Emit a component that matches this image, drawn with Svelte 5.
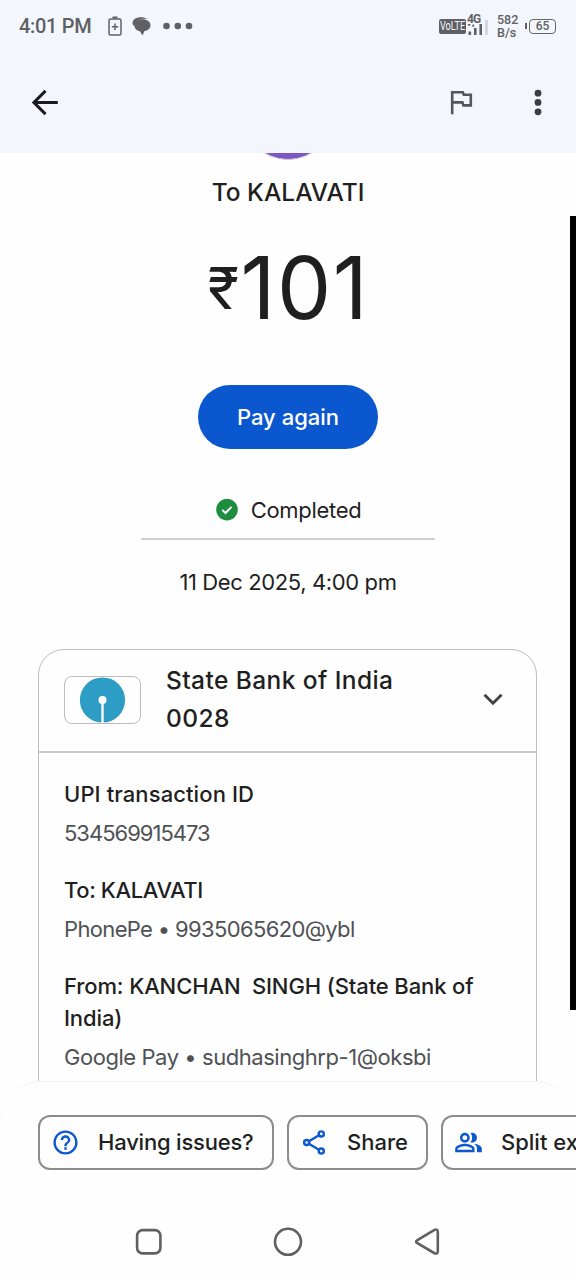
<script>
	// payment shown on the screen
	const payment = {
		payee: 'To KALAVATI',
		currency: '₹',
		amount: '101',
		status: 'Completed',
		date: '11 Dec 2025, 4:00 pm',
	};

	const bank = { name: 'State Bank of India', account: '0028' };

	const details = [
		{ key: 'upi', label: 'UPI transaction ID', value: '534569915473' },
		{ key: 'to', label: 'To: KALAVATI', value: 'PhonePe • 9935065620@ybl' },
		{
			key: 'from',
			label: 'From: KANCHAN  SINGH (State Bank of India)',
			value: 'Google Pay • sudhasinghrp-1@oksbi',
		},
	];

	const actions = [
		{ key: 'help', label: 'Having issues?' },
		{ key: 'share', label: 'Share' },
		{ key: 'split', label: 'Split expense' },
	];
</script>

<div class="screen">
	<header>
		<div class="status">
			<span class="time">4:01 PM</span>
			<svg width="14" height="20" viewBox="0 0 14 20">
				<rect x="1" y="3" width="12" height="16" rx="1.5" fill="none" stroke="#5f6064" stroke-width="1.5" />
				<path d="M4.5 0.5h5v2h-5z" fill="#5f6064" />
				<path d="M7 7.5v6.4M3.8 10.7h6.4" stroke="#5f6064" stroke-width="1.5" />
			</svg>
			<svg class="chat" width="19" height="19" viewBox="0 0 19 19">
				<path d="M2.2 9.2C-0.5 7.5 0.2 3 3.5 1.5 7-0.2 12.5 0 15.5 2.2 10 0.9 3.5 2.5 2.2 9.2z" fill="#5f6064" />
				<path d="M10.2 2.3c4.800 0 8.300 2.500 8.300 6 0 2.900-2.300 5.300-6.300 5.900L10.700 18.500 7.800 14.200C4.500 13.500 2.300 11.300 2.300 8.400c0-3.600 3.300-6.100 7.900-6.100z" fill="#5f6064" />
			</svg>
			<svg class="more" width="30" height="8" viewBox="0 0 30 8" fill="#5f6064">
				<circle cx="3.5" cy="4" r="3.3" />
				<circle cx="14.8" cy="4" r="3.3" />
				<circle cx="26" cy="4" r="3.3" />
			</svg>

			<div class="volte"><span>VoLTE</span></div>
			<div class="signal">
				<span>4G</span>
				<svg width="21" height="13" viewBox="0 0 21 13">
					<path d="M0.5 0h3.2L2.1 2.5zM4.6 2.5L6.2 0l1.6 2.5z" fill="#5f6064" />
					<path d="M2.8 7.5v3.500M8.300 4v7M13.700 0v11" stroke="#5f6064" stroke-width="2.6" />
					<path d="M19.500 -4v15" stroke="#cfd3dc" stroke-width="2.6" />
				</svg>
			</div>
			<div class="speed"><span>582</span><span>B/s</span></div>
			<div class="battery"><i></i><span>65</span></div>
		</div>

		<div class="appbar">
			<svg width="28" height="28" viewBox="0 0 28 28" fill="none" stroke="#1b1a20" stroke-width="3">
				<path d="M26.8 13.5H3M14.5 1.9L2.9 13.5l11.600 11.600" />
			</svg>
			<svg class="flag" width="24" height="26" viewBox="0 0 24 26" fill="none" stroke="#54565c" stroke-width="2.6">
				<path d="M2.2 24.2V2.200h10.600l1 2.500h7v10.700h-7.400l-1-3H2.200" />
			</svg>
			<svg class="dots" width="8" height="28" viewBox="0 0 8 28" fill="#3c3d40">
				<circle cx="4" cy="4.2" r="3.4" />
				<circle cx="4" cy="13.4" r="3.4" />
				<circle cx="4" cy="22.8" r="3.4" />
			</svg>
		</div>
	</header>

	<main>
		<div class="avatar"></div>
		<div class="payee">{payment.payee}</div>
		<div class="amount"><span class="currency">{payment.currency}</span><span>{payment.amount}</span></div>
		<button class="pay">Pay again</button>
		<div class="state">
			<svg width="22" height="22" viewBox="0 0 22 22">
				<circle cx="11" cy="10.6" r="10.8" fill="#1e8e3e" />
				<path d="M6.3 10.900l3.200 3.100 6-6.100" fill="none" stroke="#fff" stroke-width="2" />
			</svg>
			<span>{payment.status}</span>
		</div>
		<hr />
		<div class="date">{payment.date}</div>

		<section class="card">
			<div class="bank">
				<div class="logo">
					<svg width="46" height="46" viewBox="0 0 46 46">
						<circle cx="22.500" cy="23" r="22.6" fill="#2d9dc6" />
						<circle cx="22.500" cy="23" r="4" fill="#fff" />
						<path d="M22.500 23v23" stroke="#fff" stroke-width="2.4" />
					</svg>
				</div>
				<div class="bankname">
					<span>{bank.name}</span>
					<span>{bank.account}</span>
				</div>
				<svg class="chevron" width="20" height="13" viewBox="0 0 20 13" fill="none" stroke="#444" stroke-width="3">
					<path d="M1.5 1.7L10 10.2l8.500-8.500" />
				</svg>
			</div>
			<dl>
				{#each details as item (item.key)}
					<dt class={item.key}>{item.label}</dt>
					<dd class={item.key}>{item.value}</dd>
				{/each}
			</dl>
		</section>
	</main>

	<footer>
		<div class="actions">
			{#each actions as action (action.key)}
				<button class="chip {action.key}">
					<svg width="29" height="29" viewBox="0 0 24 24">
						{#if action.key === 'help'}
							<path d="M11 18h2v-2h-2v2zm1-16C6.480 2 2 6.480 2 12s4.480 10 10 10 10-4.480 10-10S17.520 2 12 2zm0 18c-4.410 0-8-3.590-8-8s3.590-8 8-8 8 3.590 8 8-3.590 8-8 8zm0-14c-2.210 0-4 1.790-4 4h2c0-1.100.9-2 2-2s2 .9 2 2c0 2-3 1.750-3 5h2c0-2.250 3-2.500 3-5 0-2.210-1.790-4-4-4z" />
						{:else if action.key === 'share'}
							<g fill="none" stroke="#0b57d0" stroke-width="2">
								<circle cx="5.5" cy="12" r="2.1" />
								<circle cx="17.6" cy="4.9" r="2.1" />
								<circle cx="17.6" cy="19.1" r="2.1" />
								<path d="M7.4 10.9l8.300-4.900M7.400 13.100l8.300 4.900" />
							</g>
						{:else}
							<path d="M16.670 13.130C18.040 14.060 19 15.320 19 17v3h4v-3c0-2.180-3.570-3.470-6.330-3.870zM15 12c2.210 0 4-1.790 4-4s-1.790-4-4-4c-.47 0-.91.1-1.330.24C14.500 5.270 15 6.580 15 8s-.5 2.730-1.330 3.760c.42.14.86.24 1.330.24zM9 12c2.210 0 4-1.790 4-4s-1.790-4-4-4-4 1.790-4 4 1.790 4 4 4zm0-6c1.100 0 2 .9 2 2s-.9 2-2 2-2-.9-2-2 .9-2 2-2zM9 13c-2.670 0-8 1.340-8 4v3h16v-3c0-2.660-5.330-4-8-4zm6 5H3v-.99C3.200 16.290 6.300 15 9 15s5.800 1.290 6 2v1z" />
						{/if}
					</svg>
					<span>{action.label}</span>
				</button>
			{/each}
		</div>
		<nav>
			<svg width="28" height="30" viewBox="0 0 28 30">
				<rect x="2.1" y="3.1" width="23.3" height="23.3" rx="5.5" />
			</svg>
			<svg width="30" height="30" viewBox="0 0 30 30">
				<circle cx="15" cy="14.8" r="13" />
			</svg>
			<svg width="28" height="30" viewBox="0 0 28 30">
				<path d="M21.5 2.900L4.400 13.200q-2.500 1.500 0 3L21.500 26.200q3.300 1.200 3.300-2V4.900q0-3.200-3.300-2z" />
			</svg>
		</nav>
	</footer>

	<div class="edge"></div>
</div>

<style>
	:global(body) {
		margin: 0;
		background: #fff;
	}

	.screen {
		position: relative;
		display: flex;
		flex-direction: column;
		width: 576px;
		height: 1280px;
		overflow: hidden;
		background: #fefefe;
		color: #1f1f1f;
		font-family: Inter, Roboto, sans-serif;
		font-size: 22px;
	}

	header {
		flex: none;
		height: 153px;
		background: #f3f6fd;
	}

	/* system status row */
	.status {
		display: flex;
		align-items: center;
		height: 52px;
		padding: 0 20px 0 19px;
		color: #5f6064;
		font-family: Roboto, sans-serif;
	}
	.time {
		width: 89px;
		font-size: 20px;
		font-weight: 500;
		letter-spacing: -0.3px;
		white-space: nowrap;
	}
	.chat {
		margin-left: 10px;
	}
	.more {
		margin-left: 12px;
	}
	.volte {
		display: flex;
		justify-content: center;
		width: 27px;
		height: 15px;
		margin-left: auto;
		border-radius: 2px;
		background: #5f6064;
		color: #f3f6fd;
		font-size: 12px;
		line-height: 15px;
	}
	.volte span {
		transform: scaleX(0.76);
	}
	.signal {
		display: flex;
		flex-direction: column;
		width: 22px;
		height: 24px;
		margin-left: 1px;
		font-size: 12px;
		font-weight: 700;
		letter-spacing: -1px;
		line-height: 10px;
	}
	.signal svg {
		overflow: visible;
	}
	.speed {
		display: flex;
		flex-direction: column;
		width: 24px;
		margin-left: 8px;
		font-size: 12.5px;
		font-weight: 500;
		line-height: 13px;
	}
	.battery {
		display: flex;
		align-items: center;
		margin-left: 4px;
		font-size: 12px;
		font-weight: 500;
	}
	.battery i {
		width: 2px;
		height: 6px;
		margin-right: 2px;
		background: #5f6064;
	}
	.battery span {
		box-sizing: border-box;
		width: 27px;
		height: 15px;
		border: 1px solid #66676b;
		border-radius: 4px;
		line-height: 13px;
		text-align: center;
	}

	.appbar {
		display: flex;
		align-items: center;
		height: 101px;
		padding: 0 34px 0 31px;
	}
	.flag {
		margin-left: auto;
	}
	.dots {
		margin-left: 60px;
	}

	main {
		display: flex;
		flex: none;
		flex-direction: column;
		align-items: center;
		height: 928px;
		overflow: hidden;
	}
	.avatar {
		box-sizing: border-box;
		flex: none;
		width: 92px;
		height: 92px;
		margin-top: -85px;
		border: 1px solid #d5cfe0;
		border-radius: 50%;
		background: #7e57c2;
	}
	.payee {
		margin-top: 16px;
		font-size: 24.5px;
		font-weight: 450;
		line-height: 32px;
	}
	.amount {
		display: flex;
		margin: 40px 0 0 1px;
		font-size: 86px;
		letter-spacing: 1.5px;
		line-height: 80px;
	}
	.currency {
		font-size: 58px;
		font-weight: 380;
	}
	.pay {
		flex: none;
		width: 180px;
		height: 64px;
		margin-top: 57px;
		padding: 0;
		border: 0;
		border-radius: 32px;
		background: #0b57d0;
		color: #fff;
		font: 500 22px Inter, sans-serif;
	}
	.state {
		display: flex;
		align-items: center;
		gap: 13px;
		margin: 45px 0 0 1px;
		letter-spacing: -0.3px;
		line-height: 32px;
	}
	hr {
		flex: none;
		width: 294px;
		height: 2px;
		margin: 12px 0 0;
		border: 0;
		background: #cfcfcf;
	}
	.date {
		margin-top: 26px;
		letter-spacing: -0.38px;
		line-height: 32px;
	}

	.card {
		box-sizing: border-box;
		flex: none;
		width: 499px;
		height: 520px;
		margin: 51px 1px 0 0;
		border: 1px solid #bdbdbd;
		border-radius: 26px;
	}
	.bank {
		box-sizing: border-box;
		display: flex;
		align-items: center;
		height: 103px;
		padding: 0 33px 2px 25px;
		border-bottom: 2px solid #cbcbcb;
	}
	.logo {
		box-sizing: border-box;
		display: flex;
		align-items: center;
		justify-content: center;
		width: 77px;
		height: 48px;
		border: 1px solid #bdbdbd;
		border-radius: 8px;
	}
	.bankname {
		display: flex;
		flex-direction: column;
		margin: -2px 0 0 25px;
		font-size: 24.5px;
		font-weight: 450;
		letter-spacing: 0.42px;
		line-height: 38px;
	}
	.chevron {
		margin-left: auto;
	}
	dl {
		margin: 0;
		padding: 25px 25px;
	}
	dt {
		font-weight: 500;
		letter-spacing: 0.1px;
		line-height: 32px;
		white-space: pre-wrap;
	}
	dd {
		margin: 7px 0 25px;
		color: #505154;
		line-height: 32px;
		white-space: nowrap;
	}
	/* ids and handles are set tighter than the labels */
	dt.to {
		letter-spacing: -0.4px;
	}
	dt.from {
		letter-spacing: -0.12px;
	}
	dd.upi {
		letter-spacing: -1px;
	}
	dd.to {
		letter-spacing: -0.65px;
	}
	dd.from {
		letter-spacing: -0.45px;
	}

	footer {
		box-sizing: border-box;
		flex: none;
		height: 199px;
		padding-top: 33px;
		border-top: 1px solid #f3f3f3;
		border-radius: 40px 40px 0 0;
	}
	.actions {
		display: flex;
		gap: 13px;
		padding-left: 38px;
	}
	.chip {
		box-sizing: border-box;
		display: flex;
		flex: none;
		align-items: center;
		height: 55px;
		padding: 0 0 1px 11px;
		border: 2px solid #8c8c8c;
		border-radius: 12px;
		background: transparent;
		color: #1f1f1f;
		font: 500 22px Inter, sans-serif;
		white-space: nowrap;
	}
	.chip svg {
		margin-right: 18px;
		fill: #0b57d0;
	}
	.help {
		width: 236px;
		letter-spacing: -0.2px;
	}
	.share {
		width: 141px;
	}
	.split {
		width: 240px;
	}
	nav {
		display: flex;
		justify-content: space-between;
		margin-top: 57px;
		padding: 0 135px;
	}
	nav svg {
		fill: none;
		stroke: #606060;
		stroke-width: 2.6px;
	}

	/* system drag handle at the right edge, drawn over the page */
	.edge {
		position: absolute;
		top: 216px;
		right: 0;
		width: 6px;
		height: 794px;
		background: #000;
	}
</style>
